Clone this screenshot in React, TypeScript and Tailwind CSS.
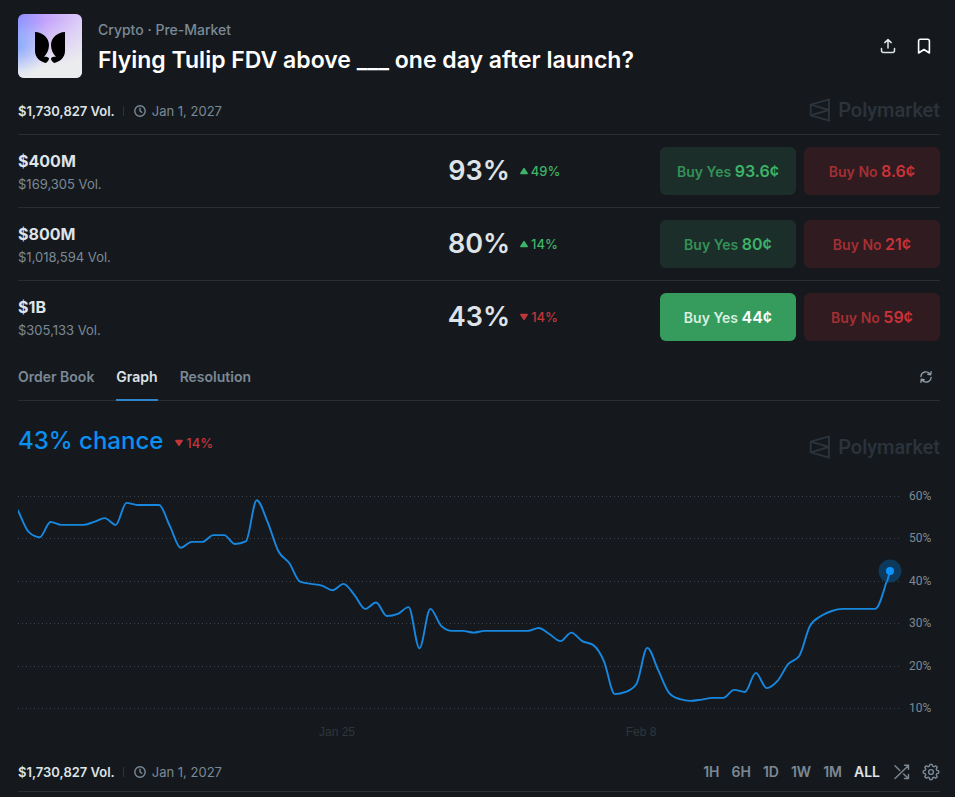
import classNames from "clsx";
import { FC, useState } from "react";

interface Outcome {
  title: string;
  volume: string;
  chance: number;
  change: number;
  yes: string;
  no: string;
}

const OUTCOMES: Outcome[] = [
  { title: "$400M", volume: "$169,305 Vol.", chance: 93, change: 49, yes: "93.6¢", no: "8.6¢" },
  { title: "$800M", volume: "$1,018,594 Vol.", chance: 80, change: 14, yes: "80¢", no: "21¢" },
  { title: "$1B", volume: "$305,133 Vol.", chance: 43, change: -14, yes: "44¢", no: "59¢" },
];

const TABS = ["Order Book", "Graph", "Resolution"];
const RANGES = ["1H", "6H", "1D", "1W", "1M", "ALL"];

const HISTORY = [
  56.7, 51.6, 50.4, 54, 53.3, 53.3, 53.3, 54, 54.9, 53.3, 58.5, 58, 58, 58, 53,
  47.9, 49.3, 49.3, 50.9, 50.9, 48.8, 49.4, 59.1, 54, 47.1, 44.3, 39.9, 39.4,
  39, 37.9, 39.4, 36.8, 33.5, 35, 31.8, 32.3, 33.9, 24.2, 33.5, 29.5, 28.3,
  28.3, 27.9, 28.3, 28.3, 28.3, 28.3, 28.3, 29, 27.5, 25.9, 27.9, 25.9, 25,
  21.2, 13.4, 13.9, 15.8, 24.3, 19.1, 13.7, 12.2, 11.8, 12.1, 12.5, 12.5, 14.4,
  13.9, 18.4, 14.8, 16.5, 20.5, 22.4, 29.5, 31.8, 33, 33.5, 33.5, 33.5, 33.5,
];
const STEP = 10.85;
const LAST = { x: 872, value: 42.4 };

const toY = (value: number) => 15.5 + (60 - value) * 4.24;

// cubic path through the points, without overshoot between them
const monotonePath = (points: Array<[number, number]>) => {
  const slopes = points.slice(1).map(([x, y], i) => (y - points[i][1]) / (x - points[i][0]));
  const tangents = points.map((_, i) => {
    if (i === 0) return slopes[0];
    if (i === points.length - 1) return slopes[i - 1];
    const a = slopes[i - 1];
    const b = slopes[i];
    if (a * b <= 0) return 0;
    return Math.sign(a) * Math.min(Math.abs(a) * 2, Math.abs(b) * 2, Math.abs(a + b) / 2);
  });
  return points
    .map(([x, y], i) => {
      if (i === 0) return `M${x},${y}`;
      const [px, py] = points[i - 1];
      const third = (x - px) / 3;
      return `C${px + third},${py + tangents[i - 1] * third} ${x - third},${y - tangents[i] * third} ${x},${y}`;
    })
    .join(" ");
};

const LINE = monotonePath([
  ...HISTORY.map((value, i): [number, number] => [i * STEP, toY(value)]),
  [LAST.x, toY(LAST.value)],
]);

const ClockIcon = () => (
  <svg className="size-3" viewBox="0 0 12 12" fill="none" stroke="currentColor" strokeWidth="1.4" strokeLinecap="round" strokeLinejoin="round" aria-hidden="true">
    <circle cx="6" cy="6" r="5.2" />
    <path d="M6 3.2V6l1.8 1.3" />
  </svg>
);

const Watermark = () => (
  <div className="flex items-center gap-2 text-[#2b333c]">
    <svg className="h-6 w-[22px]" viewBox="0 0 22 24" fill="none" stroke="currentColor" strokeWidth="1.9" aria-hidden="true">
      <path d="M20.900 1.400v21.200L2.700 17.400V6.600z" />
      <path d="M2.700 6.600 20.900 12 2.700 17.400" />
    </svg>
    <span className="font-['Roboto',sans-serif] text-xl font-medium leading-6">Polymarket</span>
  </div>
);

const Change: FC<{ value: number }> = ({ value }) => (
  <span
    className={classNames("flex items-center gap-[3px] text-[13px] font-medium leading-4", {
      "text-[#3db468]": value > 0,
      "text-[#c2363a]": value < 0,
    })}
  >
    <svg className={classNames("h-2 w-2", { "rotate-180": value < 0 })} viewBox="0 0 8 8" fill="currentColor" stroke="currentColor" strokeWidth="1.4" strokeLinejoin="round" aria-hidden="true">
      <path d="M4 1.600 7.200 6.500H.8z" />
    </svg>
    {Math.abs(value)}%
  </span>
);

const VolumeInfo = () => (
  <div className="flex items-center text-[13px] leading-5">
    <span className="font-semibold text-[#dee3e7]">$1,730,827 Vol.</span>
    <span className="ml-2 mr-[10px] h-[10px] w-px bg-[#2b333b]" />
    <span className="flex items-center gap-1.5 text-[#7b8996]">
      <ClockIcon />
      Jan 1, 2027
    </span>
  </div>
);

interface OutcomeRowProps {
  outcome: Outcome;
  selected: boolean;
  onSelect: () => void;
}
const OutcomeRow: FC<OutcomeRowProps> = ({ outcome, selected, onSelect }) => (
  <div className="grid grid-cols-[1fr_auto_1fr] items-center border-t border-[#2a2e33] py-3">
    <div className="pt-0.5">
      <div className="text-base font-bold leading-6 text-[#dee3e7]">{outcome.title}</div>
      <div className="text-[13px] leading-[22px] text-[#7b8996]">{outcome.volume}</div>
    </div>
    <div className="text-[27px] font-semibold leading-8 text-[#dee3e7]">{outcome.chance}%</div>
    <div className="flex items-center justify-between pl-[10px]">
      <Change value={outcome.change} />
      <div className="flex gap-2">
        <button
          type="button"
          onClick={onSelect}
          className={classNames("h-12 w-[136px] rounded-md text-sm font-semibold", {
            "bg-[#359c5d] text-[#d9efe0]": selected,
            "bg-[#1c2e29] text-[#339258]": !selected,
          })}
        >
          Buy Yes{" "}
          <span className={classNames("text-base", selected ? "text-white" : "text-[#3db468]")}>
            {outcome.yes}
          </span>
        </button>
        <button type="button" className="h-12 w-[136px] rounded-md bg-[#2f1b20] text-sm font-semibold text-[#a52f33]">
          Buy No <span className="text-base text-[#c93338]">{outcome.no}</span>
        </button>
      </div>
    </div>
  </div>
);

const Chart = () => (
  <svg className="block h-auto w-full" viewBox="0 0 922 271" fill="none" role="img" aria-label="Chance over time">
    {[60, 50, 40, 30, 20, 10].map((tick) => {
      const y = Math.floor(toY(tick)) + 0.5;
      return (
        <g key={tick}>
          <line x1="0" x2="883" y1={y} y2={y} stroke="#3c4248" strokeDasharray="1 3" />
          <text x="891" y={y + 3.5} className="fill-[#7b8996] font-['Roboto',sans-serif] text-xs">
            {tick}%
          </text>
        </g>
      );
    })}
    <text x="319" y="255" textAnchor="middle" className="fill-[#2f363e] font-['Liberation_Sans',sans-serif] text-xs">
      Jan 25
    </text>
    <text x="623" y="255" textAnchor="middle" className="fill-[#2f363e] font-['Liberation_Sans',sans-serif] text-xs">
      Feb 8
    </text>
    <path d={LINE} stroke="#1787df" strokeWidth="1.900" strokeLinejoin="round" strokeLinecap="round" />
    <circle cx={LAST.x} cy={toY(LAST.value)} r="11.5" fill="#0d3a5c" />
    <path d={`M${LAST.x} ${toY(LAST.value)} l-3 11`} stroke="#1787df" strokeWidth="1.900" />
    <circle cx={LAST.x} cy={toY(LAST.value)} r="4" fill="#0a93fb" />
  </svg>
);

const App: FC = () => {
  const [tab, setTab] = useState<string>("Graph");
  const [range, setRange] = useState<string>("ALL");
  const [selected, setSelected] = useState<string>("$1B");

  return (
    <main className="min-h-screen bg-[#15191d] pl-[18px] pr-[15px] pt-[14px] font-['Inter',sans-serif]">
      <header className="flex items-center gap-4">
        <svg className="size-16 shrink-0 rounded-md" viewBox="0 0 64 64" aria-hidden="true">
          <defs>
            <linearGradient id="sky" x1="0" y1="0" x2="1" y2="0">
              <stop offset="0" stopColor="#8d8dfd" />
              <stop offset=".45" stopColor="#c5a5fb" />
              <stop offset="1" stopColor="#dccbf8" />
            </linearGradient>
            <linearGradient id="mist" x1=".15" y1="0" x2=".3" y2="1">
              <stop offset=".15" stopColor="#ececf2" stopOpacity="0" />
              <stop offset=".85" stopColor="#ebecee" />
            </linearGradient>
            <radialGradient id="glow" cx="0" cy=".5" r=".5">
              <stop offset="0" stopColor="#7fa6fd" />
              <stop offset="1" stopColor="#a9c5fd" stopOpacity="0" />
            </radialGradient>
          </defs>
          <rect width="64" height="64" fill="url(#sky)" />
          <rect width="64" height="64" fill="url(#mist)" />
          <rect width="64" height="64" fill="url(#glow)" opacity=".8" />
          <path d="M17 18c8 .3 14 6 14 13 0 5-2.200 9-5 11.800 2.500-.2 4.800.4 5 1.700.2 1.700-1.800 3.800-3.300 4.500C21.500 47.500 17 43 17 37z" />
          <path d="M47 18c-8 .3-14 6-14 13 0 5 2.200 9 5 11.800-2.500-.2-4.800.4-5 1.700-.2 1.700 1.800 3.800 3.300 4.500C42.500 47.500 47 43 47 37z" />
        </svg>
        <div className="flex-1 pt-1">
          <div className="text-sm font-medium leading-5 text-[#7b8996]">Crypto · Pre-Market</div>
          <h1 className="mt-1 text-[23px] font-semibold leading-8 text-white">
            Flying Tulip FDV above ___ one day after launch?
          </h1>
        </div>
        <div className="flex gap-5 pr-2">
          <button type="button" aria-label="Share" className="text-[#dee3e7]">
            <svg className="size-4" viewBox="0 0 16 16" fill="none" stroke="currentColor" strokeWidth="1.5" strokeLinecap="round" strokeLinejoin="round">
              <path d="M8 10V1.800M4.800 4.600 8 1.500l3.200 3.100M1.500 10.500v2a2 2 0 0 0 2 2h9a2 2 0 0 0 2-2v-2" />
            </svg>
          </button>
          <button type="button" aria-label="Bookmark" className="text-white">
            <svg className="size-4" viewBox="0 0 16 16" fill="none" stroke="currentColor" strokeWidth="1.6" strokeLinejoin="round">
              <path d="M2.600 15V3a1.800 1.800 0 0 1 1.800-1.800h7.200A1.800 1.800 0 0 1 13.400 3v12L8 11.500z" />
            </svg>
          </button>
        </div>
      </header>

      <div className="flex h-14 items-center justify-between pt-2">
        <div className="pt-0.5">
          <VolumeInfo />
        </div>
        <Watermark />
      </div>

      <section>
        {OUTCOMES.map((outcome) => (
          <OutcomeRow
            key={outcome.title}
            outcome={outcome}
            selected={selected === outcome.title}
            onSelect={() => setSelected(outcome.title)}
          />
        ))}
      </section>

      <nav className="flex h-12 items-stretch gap-[22px] border-b border-[#2a2e33]">
        {TABS.map((name) => (
          <button
            key={name}
            type="button"
            onClick={() => setTab(name)}
            className={classNames("-mb-px border-b-2 pt-0.5 text-sm font-semibold leading-5", {
              "border-[#2e85cc] text-[#dee3e7]": tab === name,
              "border-transparent text-[#7b8996]": tab !== name,
            })}
          >
            {name}
          </button>
        ))}
        <button type="button" aria-label="Refresh" className="ml-auto pr-2 text-[#8e9aa6]">
          <svg className="size-3" viewBox="0 0 12 12" fill="none" stroke="currentColor" strokeWidth="1.400" strokeLinecap="round" strokeLinejoin="round">
            <path d="M.9 5.500A5.100 5.100 0 0 1 10.300 3.300M11.100.8l-.4 2.900-2.900-.4M11.100 6.500A5.100 5.100 0 0 1 1.700 8.700M.9 11.200l.4-2.900 2.900.4" />
          </svg>
        </button>
      </nav>

      <div className="flex h-20 items-center justify-between">
        <div className="flex items-center gap-3">
          <span className="text-2xl font-medium leading-8 text-[#0a8ff2]">43% chance</span>
          <div className="pt-1">
            <Change value={-14} />
          </div>
        </div>
        <div className="pt-3">
          <Watermark />
        </div>
      </div>

      <Chart />

      <footer className="flex h-10 items-center justify-between border-b border-[#2a2e33]">
        <VolumeInfo />
        <div className="flex items-center gap-3 text-sm font-semibold text-[#7b8996]">
          {RANGES.map((name) => (
            <button
              key={name}
              type="button"
              onClick={() => setRange(name)}
              className={classNames({ "text-[#dee3e7]": range === name })}
            >
              {name}
            </button>
          ))}
          <button type="button" aria-label="Shuffle" className="ml-0.5">
            <svg className="size-4" viewBox="0 0 16 16" fill="none" stroke="currentColor" strokeWidth="1.400" strokeLinecap="round" strokeLinejoin="round">
              <path d="M1 14.500 14.500 1.500M10.500 1.300h4v4M1 1.800l4.800 4.700M9.600 10l4.900 4.500M14.500 10.500v4h-4" />
            </svg>
          </button>
          <button type="button" aria-label="Settings">
            <svg className="size-[18px]" viewBox="0 0 24 24" fill="none" stroke="currentColor" strokeWidth="1.900" strokeLinejoin="round">
              <path d="M9.900 4.200 10.500 1.800h3l.6 2.400 1.900.8 2.200-1.300 2.100 2.100L19 8l.8 1.900 2.400.6v3l-2.400.6L19 16l1.300 2.200-2.100 2.100L16 19l-1.900.8-.6 2.400h-3l-.6-2.400L8 19l-2.200 1.300-2.100-2.100L5 16l-.8-1.900-2.400-.6v-3l2.400-.6L5 8 3.700 5.800l2.100-2.100L8 5z" />
              <circle cx="12" cy="12" r="3.200" />
            </svg>
          </button>
        </div>
      </footer>
    </main>
  );
};
export default App;
